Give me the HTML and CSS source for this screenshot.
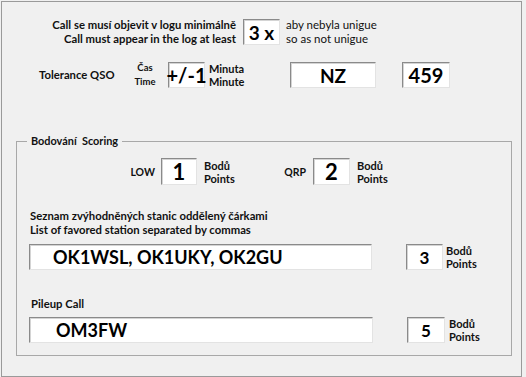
FILE: index.html
```html
<html lang="cs">
<head>
    <meta charset="UTF-8">
    <title>Nastavení</title>
    <link rel="stylesheet" href="styles.css">
</head>
<body>
<div class="window">

    <div class="row row_call">
        <div class="lbl lbl_call">
            Call se musí objevit v logu minimálně<br>
            Call must appear in the log at least
        </div>
        <div class="field f_times">3 x</div>
        <div class="lbl lbl_note">
            aby nebyla unigue<br>
            so as not unigue
        </div>
    </div>

    <div class="row row_tol">
        <div class="lbl lbl_tol">Tolerance QSO</div>
        <div class="lbl lbl_time">Čas<br>Time</div>
        <div class="field f_tol">+/-1</div>
        <div class="lbl lbl_min">Minuta<br>Minute</div>
        <div class="field f_nz">NZ</div>
        <div class="field f_rst">459</div>
    </div>

    <fieldset class="scoring">
        <legend>Bodování&nbsp; Scoring</legend>

        <div class="row row_pts">
            <div class="lbl lbl_pow lbl_low">LOW</div>
            <div class="field f_pts">1</div>
            <div class="lbl lbl_points">Bodů<br>Points</div>
            <div class="lbl lbl_pow">QRP</div>
            <div class="field f_pts">2</div>
            <div class="lbl lbl_points">Bodů<br>Points</div>
        </div>

        <div class="lbl lbl_list">
            Seznam zvýhodněných stanic oddělený čárkami<br>
            List of favored station separated by commas
        </div>
        <div class="row row_entry">
            <div class="field f_long">OK1WSL, OK1UKY, OK2GU</div>
            <div class="field f_small">3</div>
            <div class="lbl lbl_points">Bodů<br>Points</div>
        </div>

        <div class="lbl lbl_pileup">Pileup Call</div>
        <div class="row row_entry row_pileup">
            <div class="field f_long">OM3FW</div>
            <div class="field f_small">5</div>
            <div class="lbl lbl_points">Bodů<br>Points</div>
        </div>
    </fieldset>

</div>
</body>
</html>
```

FILE: styles.css
```css
* {
    margin: 0;
    padding: 0;
    box-sizing: border-box;
}
body {
    font-family: "Lato", "Liberation Sans", sans-serif;
    background-color: #f0f0f0;
    color: #000;
}
.window {
    margin: 1px 0 0 1px;
    width: 521px;
    height: 376px;
    border: 1px solid #9a9a9a;
    background-color: #f0f0f0;
    overflow: hidden;
}
.row {
    display: flex;
    align-items: center;
}
.lbl {
    font-size: 11.3px;
    line-height: 14px;
    font-weight: bold;
    color: #111;
    white-space: nowrap;
}
.field {
    display: flex;
    align-items: center;
    justify-content: center;
    height: 26px;
    background-color: #fff;
    border-top: 1px solid #8a8a8a;
    border-left: 1px solid #8a8a8a;
    border-right: 1px solid #e3e3e3;
    border-bottom: 1px solid #e3e3e3;
    box-shadow: inset 1px 1px 0 #d4d4d4;
    font-weight: bold;
    font-size: 19px;
    white-space: nowrap;
}

/* top part */
.row_call {
    margin-top: 16px;
    padding-left: 34px;
}
.lbl_call {
    width: 200px;
    text-align: right;
}
.f_times {
    width: 37px;
    margin-left: 7px;
}
.lbl_note {
    margin-left: 6px;
    font-weight: normal;
    font-size: 11.5px;
}
.row_tol {
    margin-top: 15px;
}
.lbl_tol {
    margin-left: 37px;
    width: 91px;
}
.lbl_time {
    width: 30px;
    text-align: center;
    font-size: 9.5px;
}
.f_tol {
    width: 37px;
    margin-left: 8px;
    font-size: 20px;
}
.lbl_min {
    width: 50px;
    margin-left: 4px;
    line-height: 13px;
    font-size: 11px;
}
.f_nz {
    width: 86px;
    margin-left: 31px;
}
.f_rst {
    width: 48px;
    margin-left: 26px;
    font-size: 20px;
}

/* scoring group */
.scoring {
    margin: 45px 0 0 14px;
    width: 489px;
    border: 1px solid #a8a8a8;
    padding: 0 0 12px 10px;
}
.scoring legend {
    padding: 0 4px;
    font-size: 10.9px;
    line-height: 14px;
    font-weight: bold;
    color: #111;
}
.row_pts {
    margin-top: 10px;
}
.row_pts .field {
    height: 27px;
}
.lbl_pow {
    width: 40px;
    text-align: right;
    font-size: 10.5px;
}
.lbl_low {
    margin-left: 88px;
}
.f_pts {
    width: 37px;
    margin-left: 7px;
    font-size: 22px;
}
.lbl_low + .f_pts {
    width: 36px;
    margin-left: 6px;
}
.lbl_points {
    width: 62px;
    margin-left: 7px;
    line-height: 13px;
    font-size: 11px;
}
.lbl_list {
    margin: 24px 0 0 3px;
}
.row_entry {
    margin: 7px 0 0 2px;
}
.f_long {
    width: 343px;
    justify-content: flex-start;
    padding-left: 23px;
    font-size: 18px;
}
.f_small {
    width: 37px;
    margin-left: 34px;
    font-size: 17px;
}
.row_entry .lbl_points {
    margin-left: 3px;
}
.lbl_pileup {
    margin: 27px 0 0 4px;
}
.row_pileup {
    margin-top: 6px;
}
.row_pileup .f_long {
    width: 344px;
    padding-left: 26px;
}
.row_pileup .f_small {
    width: 38px;
}
.row_pileup .lbl_points {
    margin-left: 4px;
}
```
